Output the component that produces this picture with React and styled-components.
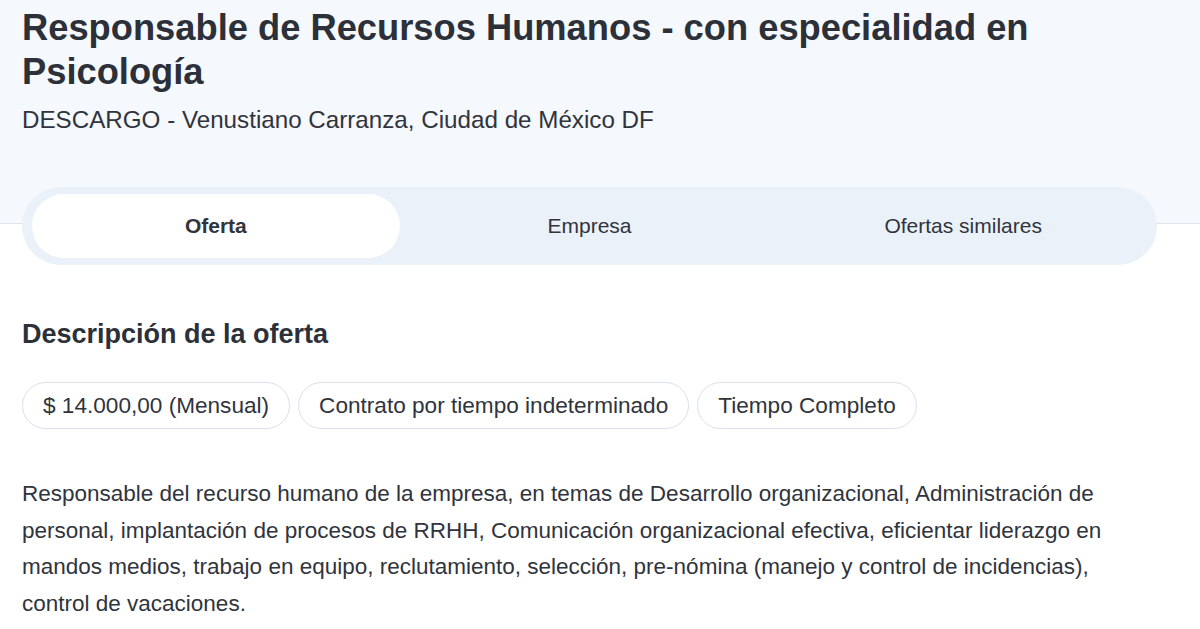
import styled, { createGlobalStyle } from "styled-components";
import { useState } from "react";

const GlobalStyle = createGlobalStyle`
  body {
    margin: 0;
    background: #ffffff;
    font-family: "Liberation Sans", Arial, sans-serif;
    color: #333740;
  }
`;

const Header = styled.header`
  background: #f5f8fd;
  border-bottom: 1px solid #dfe5ee;
  padding: 6px 22px 87px;
`;

const Title = styled.h1`
  margin: 0;
  font-size: 36.3px;
  line-height: 44px;
  font-weight: 700;
  color: #2c3039;
`;

const Subtitle = styled.p`
  margin: 10px 0 0;
  font-size: 24.2px;
  line-height: 32px;
  color: #30343c;
`;

const Tabs = styled.nav`
  display: flex;
  margin: -37px 43px 0 22px;
  padding: 7px;
  background: #ebf1f9;
  border-radius: 39px;
`;

const Tab = styled.button`
  flex: 1;
  height: 64px;
  margin: 0 3px;
  border: none;
  border-radius: 32px;
  background: ${(p) => (p.$active ? "#ffffff" : "transparent")};
  font-family: inherit;
  font-size: 21px;
  font-weight: ${(p) => (p.$active ? 700 : 400)};
  color: #30343c;
  cursor: pointer;
`;

const Content = styled.main`
  padding: 53px 43px 0 22px;
`;

const SectionTitle = styled.h2`
  margin: 0;
  font-size: 27px;
  line-height: 32px;
  font-weight: 700;
  color: #2c3039;
`;

const Chips = styled.div`
  display: flex;
  flex-wrap: wrap;
  gap: 8px;
  margin-top: 32px;
`;

const Chip = styled.span`
  display: inline-flex;
  align-items: center;
  height: 47px;
  box-sizing: border-box;
  padding: 0 20px;
  border: 1.5px solid #d8e1ec;
  border-radius: 24px;
  font-size: 22.6px;
  color: #30343c;
`;

const Description = styled.p`
  margin: 47px 0 0;
  font-size: 22.5px;
  line-height: 36.5px;
  color: #30343c;
`;

const tabs = ["Oferta", "Empresa", "Ofertas similares"];
const chips = [
  "$ 14.000,00 (Mensual)",
  "Contrato por tiempo indeterminado",
  "Tiempo Completo",
];

export default function App() {
  const [active, setActive] = useState(0);

  return (
    <>
      <GlobalStyle />
      <Header>
        <Title>Responsable de Recursos Humanos - con especialidad en Psicología</Title>
        <Subtitle>DESCARGO - Venustiano Carranza, Ciudad de México DF</Subtitle>
      </Header>
      <Tabs>
        {tabs.map((t, i) => (
          <Tab key={t} $active={i === active} onClick={() => setActive(i)}>
            {t}
          </Tab>
        ))}
      </Tabs>
      <Content>
        <SectionTitle>Descripción de la oferta</SectionTitle>
        <Chips>
          {chips.map((c) => (
            <Chip key={c}>{c}</Chip>
          ))}
        </Chips>
        <Description>
          Responsable del recurso humano de la empresa, en temas de Desarrollo
          organizacional, Administración de personal, implantación de procesos de
          RRHH, Comunicación organizacional efectiva, eficientar liderazgo en mandos
          medios, trabajo en equipo, reclutamiento, selección, pre-nómina (manejo y
          control de incidencias), control de vacaciones.
        </Description>
      </Content>
    </>
  );
}
